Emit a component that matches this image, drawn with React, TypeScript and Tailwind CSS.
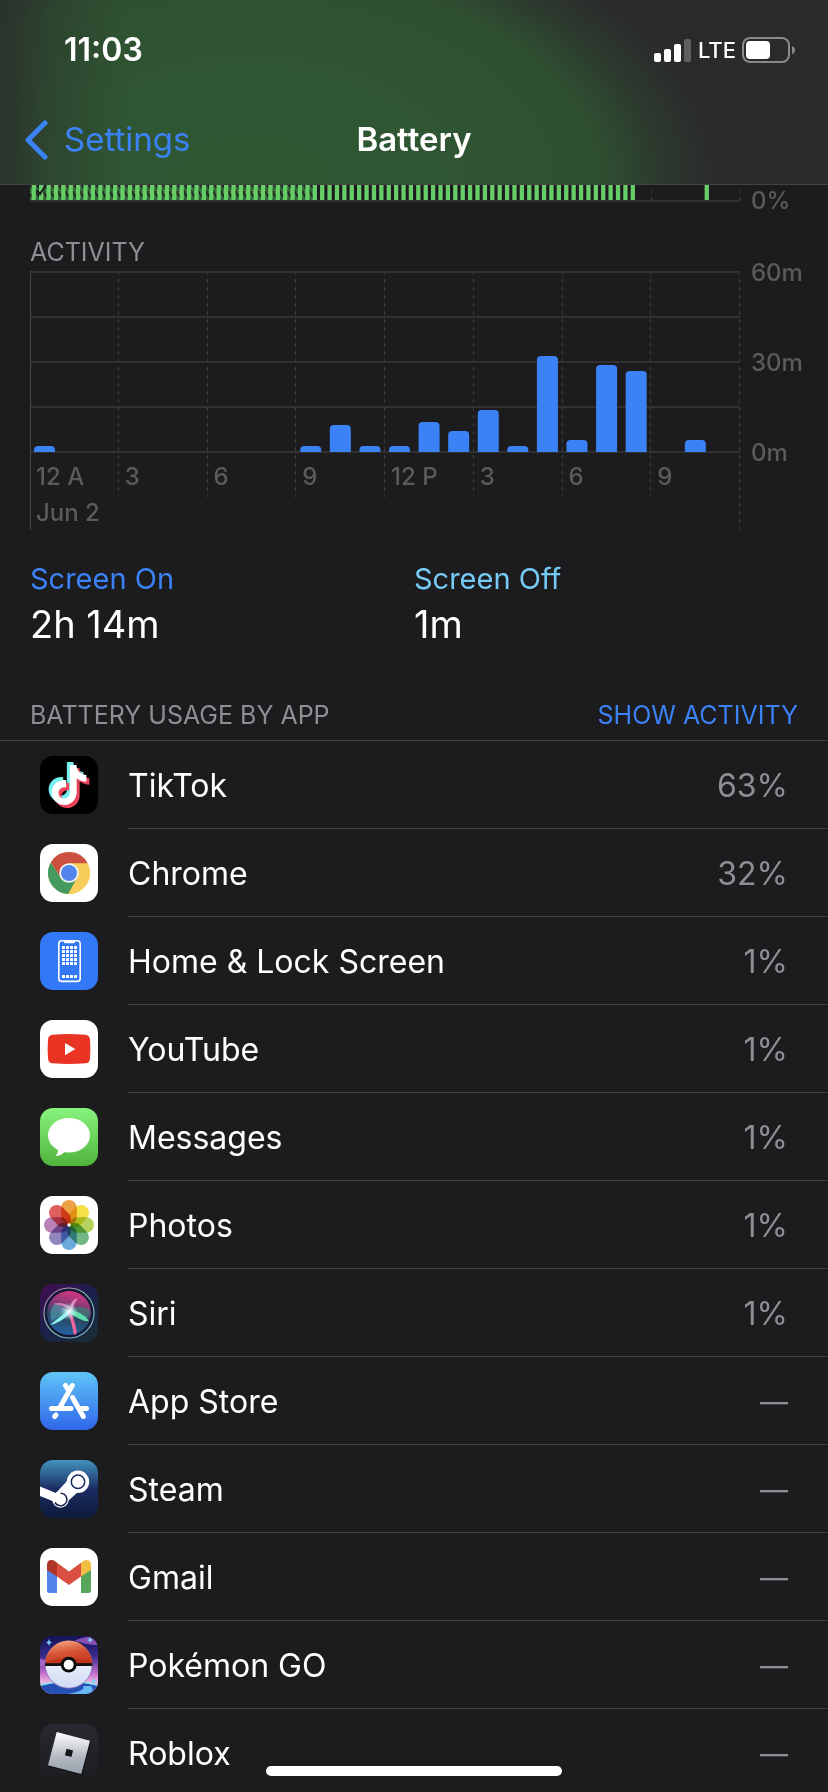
import React from "react";
import { SiTiktok } from "react-icons/si";

const activity = [2, 0, 0, 0, 0, 0, 0, 0, 0, 2, 9, 2, 2, 10, 7, 14, 2, 32, 4, 29, 27, 0, 4, 0];
const hourLabels = ["12 A", "3", "6", "9", "12 P", "3", "6", "9"];
const levelBars = Array.from({ length: 82 }, (_, i) => i).concat(91);
const SLOT = 710 / 96;

function TikTokIcon() {
  return (
    <>
      <rect width="58" height="58" fill="#000" />
      <g transform="translate(6 6)">
        <SiTiktok x="0" y="0" size={40} color="#74f0ed" />
        <SiTiktok x="6" y="6" size={40} color="#ea445a" />
        <SiTiktok x="3" y="3" size={40} color="#fff" />
      </g>
    </>
  );
}

function ChromeIcon() {
  return (
    <>
      <rect width="58" height="58" fill="#fff" />
      <circle cx="29" cy="29" r="21" fill="#f7cd5b" />
      <path d="M29 19.5H47.7A21 21 0 0 0 10.8 18.5L20.8 33.7Z" fill="#cb5040" />
      <path d="M10.8 18.5A21 21 0 0 0 28.3 50L37.2 33.7L29 38.5L20.8 33.7Z" fill="#459a5f" />
      <path d="M29 19.5H47.7A21 21 0 0 1 28.3 50L37.2 33.7Z" fill="#f7cd5b" />
      <circle cx="29" cy="29" r="9.8" fill="#f4f4f4" />
      <circle cx="29" cy="29" r="8" fill="#5383ec" />
    </>
  );
}

function HomeIcon() {
  return (
    <>
      <rect width="58" height="58" fill="#3378f6" />
      <rect x="18.8" y="8.8" width="21.4" height="40.6" rx="3" fill="none" stroke="#fff" strokeWidth="1.6" />
      <path d="M24 9H35V10Q35 11.3 33.5 11.3H25.5Q24 11.3 24 10Z" fill="#fff" />
      {[14, 18, 22, 26, 30, 43].map((y) =>
        [22, 26, 30, 34].map((x) => <rect key={`${x}-${y}`} x={x} y={y} width="3" height="3" rx="0.6" fill="#fff" />),
      )}
    </>
  );
}

function YouTubeIcon() {
  return (
    <>
      <rect width="58" height="58" fill="#fff" />
      <path d="M12.5 14.8Q29 13.4 45.5 14.8Q49.6 15.2 50 19.5Q50.8 29 50 38.5Q49.6 43 45.5 43.3Q29 44.7 12.5 43.3Q8.4 43 8 38.5Q7.2 29 8 19.5Q8.4 15.2 12.5 14.8Z" fill="#e93323" />
      <path d="M25 23V35.2L35.3 29.1Z" fill="#fff" />
    </>
  );
}

function MessagesIcon() {
  return (
    <>
      <defs>
        <linearGradient id="messages" x2="0" y2="1">
          <stop stopColor="#87f37d" />
          <stop offset="1" stopColor="#50b43c" />
        </linearGradient>
      </defs>
      <rect width="58" height="58" fill="url(#messages)" />
      <ellipse cx="29" cy="27.3" rx="21" ry="17.3" fill="#fff" />
      <path d="M18 41Q18.5 45 15.3 48Q21 48 25 43.5Z" fill="#fff" />
    </>
  );
}

const petals = ["#eda145", "#f4df45", "#b5d25c", "#72b887", "#6ba9dc", "#9284bd", "#b982b6", "#df5f5d"];

function PhotosIcon() {
  return (
    <>
      <rect width="58" height="58" fill="#fff" />
      <g className="isolate">
        {petals.map((color, i) => (
          <rect
            key={color}
            x="21.2"
            y="4"
            width="15.6"
            height="24.5"
            rx="7.8"
            fill={color}
            className="mix-blend-multiply"
            transform={`rotate(${i * 45} 29 29)`}
          />
        ))}
      </g>
      <circle cx="29" cy="29" r="1.7" fill="#fff" />
    </>
  );
}

function SiriIcon() {
  return (
    <>
      <defs>
        <linearGradient id="siriBack" x2="0.7" y2="1">
          <stop stopColor="#430d52" />
          <stop offset="0.55" stopColor="#1a1f4a" />
          <stop offset="1" stopColor="#1a2c3a" />
        </linearGradient>
        <linearGradient id="siriOrb" x1="0.6" x2="0.4" y2="1">
          <stop stopColor="#d8357f" />
          <stop offset="0.35" stopColor="#7c3c78" />
          <stop offset="0.6" stopColor="#2a4660" />
          <stop offset="1" stopColor="#2463a6" />
        </linearGradient>
        <linearGradient id="siriRing" x2="1" y2="1">
          <stop stopColor="#c065b8" />
          <stop offset="0.5" stopColor="#7fc6a8" />
          <stop offset="1" stopColor="#79a8d5" />
        </linearGradient>
        <radialGradient id="siriGlow">
          <stop stopColor="#fff" />
          <stop offset="0.35" stopColor="#d9fbff" stopOpacity="0.7" />
          <stop offset="1" stopColor="#8de0ea" stopOpacity="0" />
        </radialGradient>
      </defs>
      <rect width="58" height="58" fill="url(#siriBack)" />
      <circle cx="29" cy="29" r="25" fill="#151936" stroke="url(#siriRing)" strokeWidth="1.2" />
      <circle cx="29" cy="29" r="22" fill="url(#siriOrb)" />
      <path d="M29 27Q41 19 50 27Q49 37 43 37Z" fill="#3b8073" opacity="0.7" />
      <path d="M29 27Q14 17 13 22Q8 29 12 37Z" fill="#52a6b5" opacity="0.6" />
      <path d="M13 20Q25 16 36 28Q27 22 13 20Z" fill="#efa0cf" opacity="0.7" />
      <path d="M29 27Q31 15 38 14Q33 20 32 29Z" fill="#f19bc8" opacity="0.85" />
      <path d="M29 26Q19 33 10 41Q20 39 31 29Z" fill="#8ff1ee" />
      <path d="M29 26Q42 27 49 37Q45 39 29 29Z" fill="#61ddb0" />
      <path d="M28 28Q32 40 34 51Q38 50 36 44Q34 34 30 27Z" fill="#f2669e" />
      <circle cx="29" cy="27.5" r="9" fill="url(#siriGlow)" />
    </>
  );
}

function AppStoreIcon() {
  return (
    <>
      <defs>
        <linearGradient id="store" x2="0" y2="1">
          <stop stopColor="#5fc5f7" />
          <stop offset="1" stopColor="#2f66e9" />
        </linearGradient>
      </defs>
      <rect width="58" height="58" fill="url(#store)" />
      <g stroke="#fff" strokeWidth="5" strokeLinecap="round" fill="none">
        <path d="M32.3 13.5L19.5 36M11.5 36.4H31M41.5 36.4H46.5M16 43L14.6 44.5" />
        <path d="M25.5 13.5L28 17.5M32.5 25.5L43.3 44.5" />
      </g>
    </>
  );
}

function SteamIcon() {
  return (
    <>
      <defs>
        <linearGradient id="steam" x2="0" y2="1">
          <stop stopColor="#4293bd" />
          <stop offset="0.5" stopColor="#1b2c63" />
          <stop offset="1" stopColor="#0e1a3b" />
        </linearGradient>
      </defs>
      <rect width="58" height="58" fill="url(#steam)" />
      <path d="M0 26.5L16 33L27 21L38 32L28 41L20 44L0 36Z" fill="#fff" />
      <circle cx="38" cy="21.8" r="11.2" fill="#fff" />
      <circle cx="38" cy="21.8" r="6.7" fill="#fff" stroke="#1b2c63" strokeWidth="1.5" />
      <circle cx="20.5" cy="39.5" r="8.2" fill="#fff" />
      <path d="M15 42.5A6.3 6.3 0 1 0 20.5 33.2" fill="none" stroke="#14214a" strokeWidth="1.6" />
    </>
  );
}

function GmailIcon() {
  return (
    <>
      <rect width="58" height="58" fill="#fff" />
      <path d="M7 20L17 27V45H9.5Q7 45 7 42.5Z" fill="#5284ec" />
      <path d="M51 20L41 27V45H48.5Q51 45 51 42.5Z" fill="#58a55c" />
      <path d="M7 22V17Q7 12 11.5 12Q13.5 12 15 13.2L17 14.7V28.5Z" fill="#b03428" />
      <path d="M51 22V17Q51 12 46.5 12Q44.5 12 43 13.2L41 14.7V28.5Z" fill="#f1bd42" />
      <path d="M17 14.7L29 23.5L41 14.7V28.5L29 37L17 28.5Z" fill="#d95040" />
    </>
  );
}

function PokemonIcon() {
  return (
    <>
      <defs>
        <linearGradient id="pokeSky" x2="0" y2="1">
          <stop stopColor="#101457" />
          <stop offset="0.35" stopColor="#3b2a8c" />
          <stop offset="0.65" stopColor="#c871cf" />
          <stop offset="0.8" stopColor="#f0b8e2" />
        </linearGradient>
        <linearGradient id="pokeTop" x1="0.3" x2="0.6" y2="1">
          <stop stopColor="#f3a27c" />
          <stop offset="0.5" stopColor="#d75436" />
          <stop offset="1" stopColor="#c7361f" />
        </linearGradient>
        <linearGradient id="pokeBottom" x2="0" y2="1">
          <stop stopColor="#fff" />
          <stop offset="1" stopColor="#cfdaf4" />
        </linearGradient>
      </defs>
      <rect width="58" height="58" fill="url(#pokeSky)" />
      <path d="M34 5Q44 0 58 0V9Q46 9 40 6Z" fill="#8850b4" />
      <path d="M0 23L10 25V30H0Z" fill="#a562cb" />
      <path d="M0 50Q29 42 58 50V58H0Z" fill="#2650b4" />
      <path d="M0 49Q29 42 58 49" fill="none" stroke="#78e5ec" strokeWidth="1.5" />
      <path d="M27 58Q46 55 43 50L51 50Q56 55 47 58Z" fill="#66b8f3" />
      <path d="M9 3L10 5.5L12 6.5L10 7.5L9 10L8 7.5L6 6.5L8 5.5ZM50 1L51 3L53 4L51 5L50 7L49 5L47 4L49 3ZM54 42L55 44L57 45L55 46L54 48L53 46L51 45L53 44Z" fill="#7ccdf5" />
      <circle cx="28.7" cy="28.7" r="23.5" fill="url(#pokeBottom)" stroke="#8b6bb8" strokeWidth="0.8" />
      <path d="M5.2 28A23.5 23.5 0 0 1 52.2 28Z" fill="url(#pokeTop)" />
      <path d="M5.5 25.5Q29 19 52 25.5V28H5.5Z" fill="#b92d1a" opacity="0.6" />
      <rect x="5" y="27.2" width="47.4" height="2.8" fill="#111" />
      <circle cx="28.7" cy="28.7" r="7.9" fill="#0b0b0b" />
      <circle cx="28.7" cy="28.7" r="5" fill="#fff" />
    </>
  );
}

function RobloxIcon() {
  return (
    <>
      <defs>
        <linearGradient id="robloxBack" x2="0" y2="1">
          <stop stopColor="#292a31" />
          <stop offset="1" stopColor="#1b1c1e" />
        </linearGradient>
        <linearGradient id="robloxFace" x2="0" y2="1">
          <stop stopColor="#fff" />
          <stop offset="0.6" stopColor="#b3b9c2" />
          <stop offset="1" stopColor="#98a0ab" />
        </linearGradient>
      </defs>
      <rect width="58" height="58" fill="url(#robloxBack)" />
      <path d="M17.5 9L51 17.5L42.5 51.5L9 43Z" fill="#0c0d0f" opacity="0.6" />
      <path
        d="M16.7 8L50 16.7L41.3 50L8 41.3ZM26.6 24.7L24.9 31.2L31.4 32.9L33.1 26.4Z"
        fill="url(#robloxFace)"
        fillRule="evenodd"
      />
    </>
  );
}

const apps = [
  { name: "TikTok", usage: "63%", Icon: TikTokIcon },
  { name: "Chrome", usage: "32%", Icon: ChromeIcon },
  { name: "Home & Lock Screen", usage: "1%", Icon: HomeIcon },
  { name: "YouTube", usage: "1%", Icon: YouTubeIcon },
  { name: "Messages", usage: "1%", Icon: MessagesIcon },
  { name: "Photos", usage: "1%", Icon: PhotosIcon },
  { name: "Siri", usage: "1%", Icon: SiriIcon },
  { name: "App Store", usage: null, Icon: AppStoreIcon },
  { name: "Steam", usage: null, Icon: SteamIcon },
  { name: "Gmail", usage: null, Icon: GmailIcon },
  { name: "Pokémon GO", usage: null, Icon: PokemonIcon },
  { name: "Roblox", usage: null, Icon: RobloxIcon },
];

function StatusBar() {
  return (
    <div className="flex h-25 items-center justify-between pr-8 pl-16">
      <span className="text-[32px] leading-10 font-semibold">11:03</span>
      <div className="flex items-center gap-1.5">
        <svg width="38" height="24" viewBox="0 0 38 24" fill="#fff" aria-hidden="true">
          <rect y="15" width="7" height="9" rx="2" />
          <rect x="10" y="11" width="7" height="13" rx="2" />
          <rect x="20" y="6" width="7" height="18" rx="2" />
          <rect x="30" y="1" width="7" height="23" rx="2" opacity="0.25" />
        </svg>
        <span className="text-[22px] font-medium">LTE</span>
        <svg width="54" height="26" viewBox="0 0 54 26" aria-hidden="true">
          <rect x="1" y="1" width="46" height="24" rx="7" fill="none" stroke="#87898a" strokeWidth="2" />
          <rect x="4" y="4" width="24" height="18" rx="4" fill="#fff" />
          <path d="M50 9Q53 10 53 13T50 17Z" fill="#87898a" />
        </svg>
      </div>
    </div>
  );
}

function LevelChart() {
  return (
    <div className="flex h-9 pl-[30px]">
      <svg width="712" height="18" viewBox="0 0 712 18" className="shrink-0" aria-label="Battery level">
        <defs>
          <pattern id="hatch" width="7.4" height="9" patternUnits="userSpaceOnUse">
            <rect width="7.4" height="9" fill="#35693a" />
            <path d="M0 0L7.4 9M-3.7 -4.5L0 0M7.4 0L11 4.5" stroke="#1c1c1e" strokeWidth="2.5" />
          </pattern>
        </defs>
        <path d="M0 16H710" stroke="#303032" strokeWidth="2" />
        <path d="M621.5 4V16M710 4V16" stroke="#3a3a3c" strokeDasharray="4 4" />
        <rect width="287" height="15" fill="url(#hatch)" />
        {levelBars.map((i) => (
          <rect key={i} x={i * SLOT + 1.6} y="0" width="4.3" height="15" fill="#67ce67" />
        ))}
        <path d="M7 5L10 9L16 0" fill="none" stroke="#1c1c1e" strokeWidth="2" />
      </svg>
      <span className="pt-1 pl-[9px] text-2xl leading-6 font-medium text-[#5b5b5e]">0%</span>
    </div>
  );
}

function ActivityChart() {
  return (
    <div className="flex pl-[30px]">
      <div className="grid shrink-0">
        <svg width="712" height="260" viewBox="0 0 712 260" className="col-start-1 row-start-1" aria-label="Activity by hour">
          {[1, 46, 91, 136, 181].map((y) => (
            <path key={y} d={`M0 ${y}H710`} stroke="#303032" strokeWidth="2" />
          ))}
          <path d="M0.5 0V259" stroke="#48484a" />
          {[1, 2, 3, 4, 5, 6, 7, 8].map((n) => (
            <path
              key={n}
              d={`M${Math.round(n * 88.75) - 0.5} 0V${n === 8 ? 259 : 226}`}
              stroke="#3a3a3c"
              strokeDasharray="4 4"
            />
          ))}
          {activity.map((minutes, i) =>
            minutes ? (
              <path
                key={i}
                d={`M${(i * 710) / 24 + 4} 181v${4 - minutes * 3}q0 -4 4 -4h13q4 0 4 4v${minutes * 3 - 4}z`}
                fill="#3b82f7"
              />
            ) : null,
          )}
        </svg>
        <div className="col-start-1 row-start-1 w-[710px] self-end text-2xl leading-9 font-medium text-[#5b5b5e]">
          <div className="grid grid-cols-8">
            {hourLabels.map((label, i) => (
              <span key={i} className="pl-1.5">{label}</span>
            ))}
          </div>
          <div className="pl-1.5">Jun 2</div>
        </div>
      </div>
      <div className="-mt-2.5 flex h-[204px] flex-col justify-between pl-[9px] text-2xl leading-6 font-medium text-[#5b5b5e]">
        <span>60m</span>
        <span>30m</span>
        <span>0m</span>
      </div>
    </div>
  );
}

export default function App() {
  return (
    <div className="flex h-screen flex-col overflow-hidden bg-[#1c1c1e] font-['Inter','Liberation_Sans',sans-serif] text-white">
      <header className="shrink-0 border-b border-[#414342] bg-[#2a2a2b]">
        <div className="bg-[linear-gradient(to_right,#2a302ce6_0%,#2a302c66_6%,transparent_15%),radial-gradient(ellipse_57%_155%_at_30%_100%,#2f5833_0%,#2f5532_45%,#2f5031_74%,#2c3a2e_87%,transparent_100%)]">
          <StatusBar />
          <nav className="grid h-[84px] grid-cols-3 items-center px-6 pb-1 text-[33px]">
            <a href="#settings" className="flex items-center gap-4 text-[#3b82f7]">
              <svg width="24" height="40" viewBox="0 0 24 40" fill="none" aria-hidden="true">
                <path d="M21 3L4 20L21 37" stroke="currentColor" strokeWidth="5" strokeLinecap="round" strokeLinejoin="round" />
              </svg>
              Settings
            </a>
            <h1 className="text-center font-semibold">Battery</h1>
          </nav>
        </div>
      </header>

      <main className="min-h-0 flex-1 overflow-hidden">
        <LevelChart />
        <h2 className="mt-[15px] mb-[3px] pl-[30px] text-[25px] leading-8 text-[#8e8e93]">ACTIVITY</h2>
        <ActivityChart />

        <dl className="grid grid-cols-2 px-[30px] pt-[30px]">
          <div>
            <dt className="text-[29px] leading-9 text-[#3b82f7]">Screen On</dt>
            <dd className="text-[38px] leading-[54px]">2h 14m</dd>
          </div>
          <div>
            <dt className="text-[29px] leading-9 text-[#76cbf6]">Screen Off</dt>
            <dd className="text-[38px] leading-[54px]">1m</dd>
          </div>
        </dl>

        <div className="mt-12 flex items-center justify-between border-b border-[#3d3d40] px-[30px] pb-[9px] text-[25px] leading-8">
          <h2 className="text-[#8e8e93]">BATTERY USAGE BY APP</h2>
          <button type="button" className="text-[#3b82f7]">SHOW ACTIVITY</button>
        </div>
        <ul>
          {apps.map(({ name, usage, Icon }) => (
            <li key={name} className="flex h-22 items-center pl-10">
              <svg width="58" height="58" viewBox="0 0 58 58" className="shrink-0 rounded-[13px]" aria-hidden="true">
                <Icon />
              </svg>
              <div className="ml-[30px] flex h-full flex-1 items-center justify-between border-b border-[#3d3d40] pt-0.5 pr-10 text-[32px]">
                <span>{name}</span>
                {usage ? (
                  <span className="text-[#8e8e93]">{usage}</span>
                ) : (
                  <span className="text-[28px] text-[#8e8e93]">—</span>
                )}
              </div>
            </li>
          ))}
        </ul>
      </main>
      <div className="fixed inset-x-0 bottom-4 mx-auto h-2.5 w-[296px] rounded-full bg-white" />
    </div>
  );
}
